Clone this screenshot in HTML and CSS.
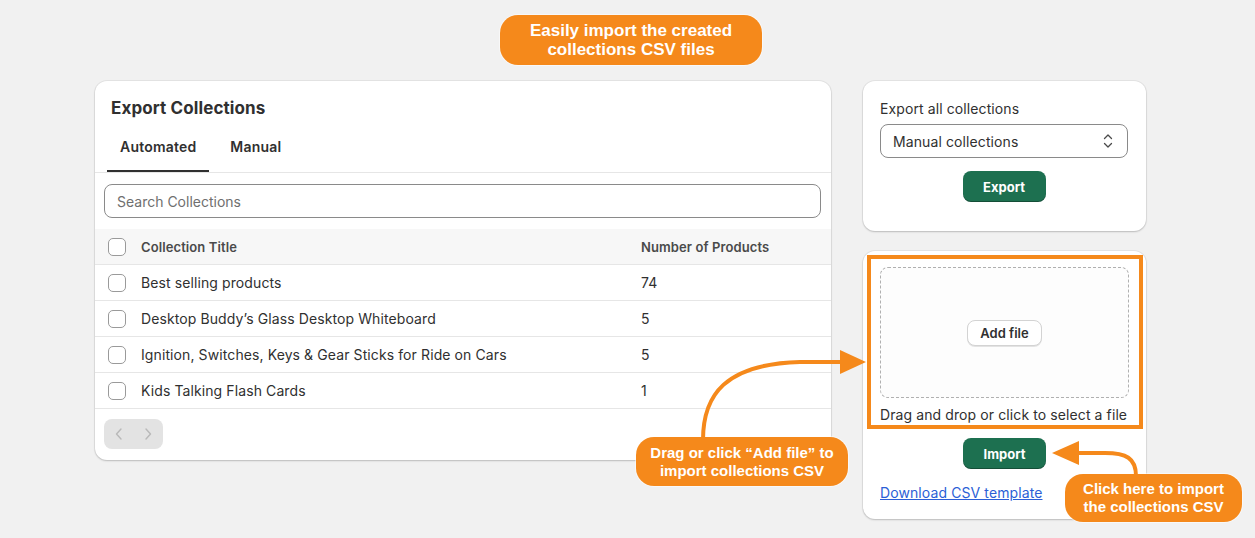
FILE: index.html
```html
<!DOCTYPE html>
<html lang="en">
<head>
    <meta charset="UTF-8">
    <meta name="viewport" content="width=device-width, initial-scale=1.0">
    <title>Export Collections</title>
    <link rel="stylesheet" href="styles.css">
</head>
<body>
    <div class="page">
        <div class="card export-card">
            <h2 class="card-title">Export Collections</h2>
            <div class="tabs">
                <button class="tab active">Automated</button>
                <button class="tab">Manual</button>
            </div>
            <div class="search-wrap">
                <input class="search" type="text" placeholder="Search Collections">
            </div>
            <div class="table">
                <div class="row head">
                    <span class="check"></span>
                    <span>Collection Title</span>
                    <span>Number of Products</span>
                </div>
                <div class="row">
                    <span class="check"></span>
                    <span>Best selling products</span>
                    <span>74</span>
                </div>
                <div class="row">
                    <span class="check"></span>
                    <span>Desktop Buddy’s Glass Desktop Whiteboard</span>
                    <span>5</span>
                </div>
                <div class="row">
                    <span class="check"></span>
                    <span>Ignition, Switches, Keys &amp; Gear Sticks for Ride on Cars</span>
                    <span>5</span>
                </div>
                <div class="row">
                    <span class="check"></span>
                    <span>Kids Talking Flash Cards</span>
                    <span>1</span>
                </div>
            </div>
            <div class="pager-wrap">
                <div class="pager">
                    <span class="pager-btn">
                        <svg width="8" height="12" viewBox="0 0 8 12"><path d="M6 1 1.5 6 6 11" fill="none" stroke="#b9b9b9" stroke-width="1.4" stroke-linecap="round" stroke-linejoin="round"/></svg>
                    </span>
                    <span class="pager-btn">
                        <svg width="8" height="12" viewBox="0 0 8 12"><path d="M2 1 6.5 6 2 11" fill="none" stroke="#b9b9b9" stroke-width="1.4" stroke-linecap="round" stroke-linejoin="round"/></svg>
                    </span>
                </div>
            </div>
        </div>

        <div class="side">
            <div class="card small-card">
                <div class="label">Export all collections</div>
                <div class="select">
                    <span>Manual collections</span>
                    <svg width="10" height="16" viewBox="0 0 10 16"><path d="M1.5 5.5 5 2l3.5 3.5M1.5 10.5 5 14l3.5-3.5" fill="none" stroke="#4a4a4a" stroke-width="1.3" stroke-linecap="round" stroke-linejoin="round"/></svg>
                </div>
                <button class="btn-primary">Export</button>
            </div>

            <div class="card small-card import-card">
                <div class="dropzone">
                    <button class="btn-plain">Add file</button>
                </div>
                <div class="hint">Drag and drop or click to select a file</div>
                <button class="btn-primary import-btn">Import</button>
                <a class="link" href="#">Download CSV template</a>
                <div class="highlight"></div>
            </div>
        </div>
    </div>

    <!-- annotation overlay -->
    <svg class="arrows" width="1255" height="538" viewBox="0 0 1255 538">
        <path d="M703 440 C703 395 725 364 800 362 L842 362" fill="none" stroke="#f5891b" stroke-width="4"/>
        <path d="M866 362 L840 350 L840 374 Z" fill="#f5891b"/>
        <path d="M1136 476 C1136 458 1126 453 1105 453 L1076 453" fill="none" stroke="#f5891b" stroke-width="4"/>
        <path d="M1052 453 L1079 441 L1079 465 Z" fill="#f5891b"/>
    </svg>
    <div class="callout callout-top">Easily import the created<br>collections CSV files</div>
    <div class="callout callout-drag">Drag or click “Add file” to<br>import collections CSV</div>
    <div class="callout callout-import">Click here to import<br>the collections CSV</div>
</body>
</html>
```

FILE: styles.css
```css
* {
    margin: 0;
    padding: 0;
    box-sizing: border-box;
}

body {
    font-family: 'Inter', 'Noto Sans', sans-serif;
    background: #f1f1f1;
    color: #303030;
    font-size: 14px;
    letter-spacing: 0.1px;
    width: 1255px;
    height: 538px;
    overflow: hidden;
    position: relative;
}

.page {
    display: flex;
    align-items: flex-start;
    gap: 32px;
    padding: 81px 0 0 95px;
}

.card {
    background: #fff;
    border-radius: 12px;
    box-shadow: 0 0 0 1px rgba(0, 0, 0, 0.05), 0 1px 2px rgba(0, 0, 0, 0.18);
}

.export-card {
    width: 736px;
    overflow: hidden;
}

.card-title {
    font-size: 17px;
    font-weight: 700;
    line-height: 24px;
    padding: 15px 16px 0;
}

.tabs {
    display: flex;
    gap: 8px;
    padding: 0 12px;
    border-bottom: 1px solid #e6e6e6;
}

.tab {
    font: inherit;
    font-weight: 600;
    font-size: 14px;
    line-height: 20px;
    letter-spacing: 0.2px;
    color: #303030;
    background: none;
    border: none;
    border-bottom: 2px solid transparent;
    padding: 17px 13px 13px;
}

.tab.active {
    border-bottom-color: #303030;
}

.search-wrap {
    padding: 11px 10px 11px 9px;
}

.search {
    display: block;
    width: 100%;
    height: 34px;
    border: 1px solid #8a8a8a;
    border-radius: 8px;
    padding: 0 12px;
    font: inherit;
    font-size: 14px;
    color: #303030;
}

.search::placeholder {
    color: #6f6f6f;
}

.row {
    display: grid;
    grid-template-columns: 18px 485px 1fr;
    column-gap: 15px;
    align-items: center;
    height: 36px;
    padding-left: 13px;
    border-bottom: 1px solid #e6e6e6;
    line-height: 20px;
}

.row.head {
    background: #f7f7f7;
    font-size: 13px;
    font-weight: 600;
    color: #4a4a4a;
}

.check {
    width: 18px;
    height: 18px;
    border: 1px solid #9a9a9a;
    border-radius: 5px;
    background: #fff;
}

.pager-wrap {
    padding: 10px 9px 11px;
}

.pager {
    display: flex;
    width: 59px;
    height: 30px;
    background: #e3e3e3;
    border-radius: 8px;
}

.pager-btn {
    flex: 1;
    display: flex;
    align-items: center;
    justify-content: center;
}

.side {
    width: 283px;
    display: flex;
    flex-direction: column;
    gap: 20px;
}

.small-card {
    padding: 18px 18px 29px 17px;
    display: flex;
    flex-direction: column;
    align-items: center;
    position: relative;
}

.label {
    align-self: stretch;
    line-height: 20px;
}

.select {
    align-self: stretch;
    margin-top: 5px;
    height: 34px;
    border: 1px solid #8a8a8a;
    border-radius: 8px;
    display: flex;
    align-items: center;
    justify-content: space-between;
    padding: 0 14px 0 12px;
}

.btn-primary {
    margin-top: 13px;
    width: 83px;
    height: 31px;
    border: none;
    border-radius: 8px;
    background: #1d7050;
    color: #fff;
    font: inherit;
    font-weight: 700;
    font-size: 13px;
    box-shadow: inset 0 -1px 0 rgba(0, 0, 0, 0.3);
}

.import-card {
    padding: 16px 17px 16px;
}

.dropzone {
    align-self: stretch;
    height: 131px;
    border: 1px dashed #b0b0b0;
    border-radius: 8px;
    background: #fdfdfd;
    display: flex;
    align-items: center;
    justify-content: center;
}

.btn-plain {
    width: 75px;
    height: 26px;
    border: 1px solid #d3d3d3;
    border-radius: 8px;
    background: #fff;
    font: inherit;
    font-weight: 600;
    font-size: 13px;
    color: #303030;
    box-shadow: 0 1px 0 rgba(0, 0, 0, 0.1);
}

.hint {
    align-self: stretch;
    margin-top: 7px;
    line-height: 20px;
}

.import-btn {
    margin-top: 13px;
}

.link {
    align-self: flex-start;
    margin-top: 14px;
    line-height: 20px;
    color: #2c5fd6;
}

.highlight {
    position: absolute;
    top: 4px;
    left: 4px;
    width: 276px;
    height: 174px;
    border: 4px solid #f5891b;
}

.arrows {
    position: absolute;
    top: 0;
    left: 0;
    z-index: 2;
}

.callout {
    position: absolute;
    z-index: 1;
    background: #f5891b;
    color: #fff;
    font-family: 'Liberation Sans', Arial, sans-serif;
    font-weight: 700;
    font-size: 15px;
    line-height: 18px;
    letter-spacing: 0;
    text-align: center;
    border-radius: 18px;
    display: flex;
    align-items: center;
    justify-content: center;
    box-shadow: 0 0 0 1px rgba(255, 255, 255, 0.5);
}

.callout-top {
    left: 500px;
    top: 15px;
    width: 262px;
    height: 50px;
    font-size: 17px;
    line-height: 19px;
}

.callout-drag {
    left: 636px;
    top: 437px;
    width: 212px;
    height: 49px;
}

.callout-import {
    left: 1065px;
    top: 474px;
    width: 177px;
    height: 48px;
}
```
